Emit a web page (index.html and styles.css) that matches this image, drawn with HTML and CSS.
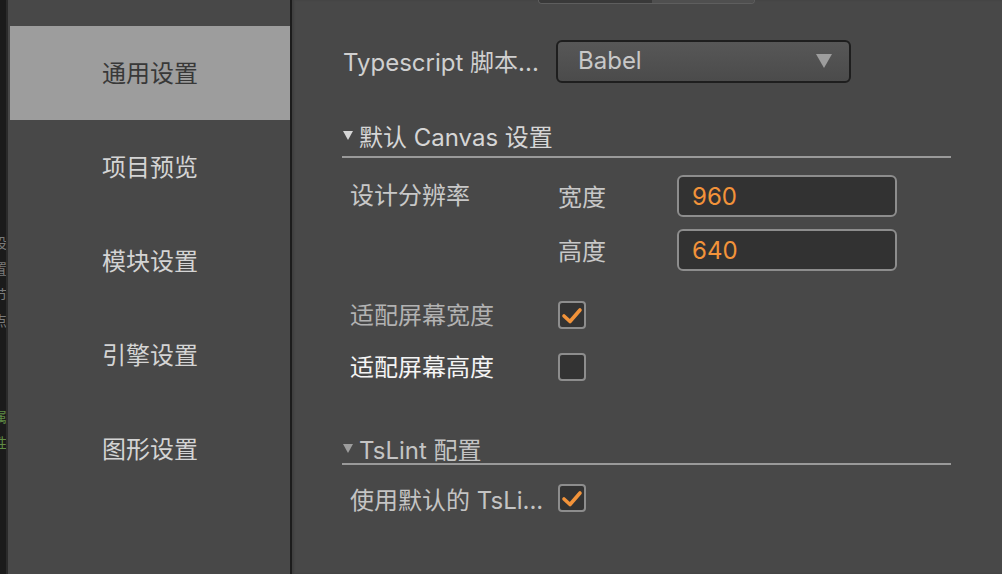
FILE: index.html
```html
<!DOCTYPE html>
<html lang="zh-CN">
<head>
<meta charset="utf-8">
<title>项目设置</title>
<link rel="stylesheet" href="styles.css">
</head>
<body>
<div class="app">
  <div class="strip">
    <div class="strip-text">设置节点</div>
    <div class="strip-text green">属性</div>
  </div>
  <nav class="sidebar">
    <div class="nav-item active">通用设置</div>
    <div class="nav-item">项目预览</div>
    <div class="nav-item">模块设置</div>
    <div class="nav-item">引擎设置</div>
    <div class="nav-item">图形设置</div>
  </nav>
  <main class="content">
    <div class="seg"><span class="seg-a"></span><span class="seg-b"></span></div>

    <div class="row-ts">
      <div class="ts-label">Typescript 脚本...</div>
      <div class="select">
        <span class="select-text">Babel</span>
        <svg class="select-arrow" width="16" height="14" viewBox="0 0 16 14"><polygon points="0,0 16,0 8,14" fill="#9d9d9d"/></svg>
      </div>
    </div>

    <div class="section-head head-canvas">
      <svg class="tri" width="10" height="9" viewBox="0 0 10 9"><polygon points="0,0 10,0 5,9" fill="#d6d6d6"/></svg>
      <span>默认 Canvas 设置</span>
    </div>

    <div class="res">
      <div class="res-label">设计分辨率</div>
      <div class="sub-label">宽度</div>
      <div class="input">960</div>
      <div class="sub-label">高度</div>
      <div class="input">640</div>
    </div>

    <div class="checks">
      <div class="check-label dim">适配屏幕宽度</div>
      <div class="checkbox"><svg width="24" height="24" viewBox="0 0 24 24"><polyline points="4,13 10,18.5 20,7" fill="none" stroke="#f2933a" stroke-width="3.6" stroke-linecap="round" stroke-linejoin="round"/></svg></div>
      <div class="check-label bright">适配屏幕高度</div>
      <div class="checkbox"></div>
    </div>

    <div class="section-head head-lint">
      <svg class="tri" width="10" height="9" viewBox="0 0 10 9"><polygon points="0,0 10,0 5,9" fill="#9d9d9d"/></svg>
      <span>TsLint 配置</span>
    </div>

    <div class="checks lint">
      <div class="check-label">使用默认的 TsLi...</div>
      <div class="checkbox"><svg width="24" height="24" viewBox="0 0 24 24"><polyline points="4,13 10,18.5 20,7" fill="none" stroke="#f2933a" stroke-width="3.6" stroke-linecap="round" stroke-linejoin="round"/></svg></div>
    </div>
  </main>
</div>
</body>
</html>
```
FILE: styles.css
```css
* { box-sizing: border-box; }
html, body { margin: 0; padding: 0; }
body {
  width: 1002px;
  height: 574px;
  overflow: hidden;
  background: #484848;
  font-family: Inter, "Noto Sans CJK SC", sans-serif;
  font-size: 24px;
  color: #c8c8c8;
}
.app {
  display: flex;
  height: 574px;
}
.strip {
  width: 8px;
  flex: none;
  background: #1b1b1b;
  border-right: 2px solid #2b2b2b;
  overflow: hidden;
  display: flex;
  flex-direction: column;
  padding-top: 236px;
  gap: 70px;
}
.strip-text {
  writing-mode: vertical-rl;
  font-size: 14px;
  line-height: 14px;
  margin-left: -9px;
  color: #7a7a7a;
  letter-spacing: 12px;
}
.strip-text.green { color: #5f8c45; }
.sidebar {
  width: 284px;
  flex: none;
  padding: 26px 0 0 2px;
  border-right: 2px solid #1c1c1c;
  background: #484848;
}
.nav-item {
  height: 94px;
  padding-bottom: 4px;
  display: flex;
  align-items: center;
  justify-content: center;
  color: #d4d4d4;
  font-size: 24px;
}
.nav-item.active {
  background: #9d9d9d;
  color: #383838;
}
.content {
  flex: 1;
  padding: 0 51px 0 50px;
  box-shadow: inset 2px 0 2px rgba(0, 0, 0, 0.12);
}
.seg {
  display: flex;
  width: 217px;
  height: 4px;
  margin-left: 196px;
  border: 1px solid #5e5e5e;
  border-top: 0;
  border-radius: 0 0 6px 6px;
  overflow: hidden;
}
.seg-a { width: 113px; background: #393939; }
.seg-b { flex: 1; background: #4f4f4f; }
.row-ts {
  margin-top: 36px;
  display: flex;
  align-items: center;
  height: 43px;
}
.ts-label {
  width: 214px;
  padding-left: 1px;
  padding-bottom: 2px;
  color: #d0d0d0;
  white-space: nowrap;
}
.select {
  width: 295px;
  height: 43px;
  border: 2px solid #1e1e1e;
  border-radius: 6px;
  background: linear-gradient(#575757, #4b4b4b);
  display: flex;
  align-items: center;
  justify-content: space-between;
  padding: 0 17px 2px 20px;
}
.select-text { color: #c8c8c8; }
.section-head {
  display: flex;
  align-items: center;
  gap: 6px;
  height: 36px;
  padding-left: 1px;
  border-bottom: 2px solid #9a9a9a;
  color: #d6d6d6;
}
.head-canvas {
  margin-top: 39px;
  padding-bottom: 8px;
}
.head-lint {
  margin-top: 52px;
  height: 32px;
  color: #c4c4c4;
}
.res {
  margin-top: 17px;
  padding-left: 8px;
  display: grid;
  grid-template-columns: 208px 119px 220px;
  grid-template-rows: 42px 42px;
  row-gap: 12px;
  align-items: center;
}
.res-label {
  grid-row: 1;
  grid-column: 1;
  align-self: start;
  margin-top: 1px;
  color: #c8c8c8;
}
.sub-label { grid-column: 2; color: #c8c8c8; padding-bottom: 2px; }
.input {
  grid-column: 3;
  height: 42px;
  border: 2px solid #8d8d8d;
  border-radius: 6px;
  background: #323232;
  color: #f2933a;
  display: flex;
  align-items: center;
  padding-left: 13px;
}
.checks {
  margin-top: 30px;
  padding-left: 8px;
  display: grid;
  grid-template-columns: 208px 28px;
  grid-auto-rows: 28px;
  row-gap: 24px;
  align-items: center;
}
.checks.lint { margin-top: 19px; }
.check-label { white-space: nowrap; color: #c4c4c4; padding-bottom: 4px; }
.checks.lint .check-label { padding-bottom: 0; }
.check-label.dim { color: #b2b2b2; }
.check-label.bright { color: #f4f4f4; }
.checkbox {
  width: 28px;
  height: 28px;
  border: 2px solid #8d8d8d;
  border-radius: 4px;
  background: #333333;
  display: flex;
  align-items: center;
  justify-content: center;
}
```
